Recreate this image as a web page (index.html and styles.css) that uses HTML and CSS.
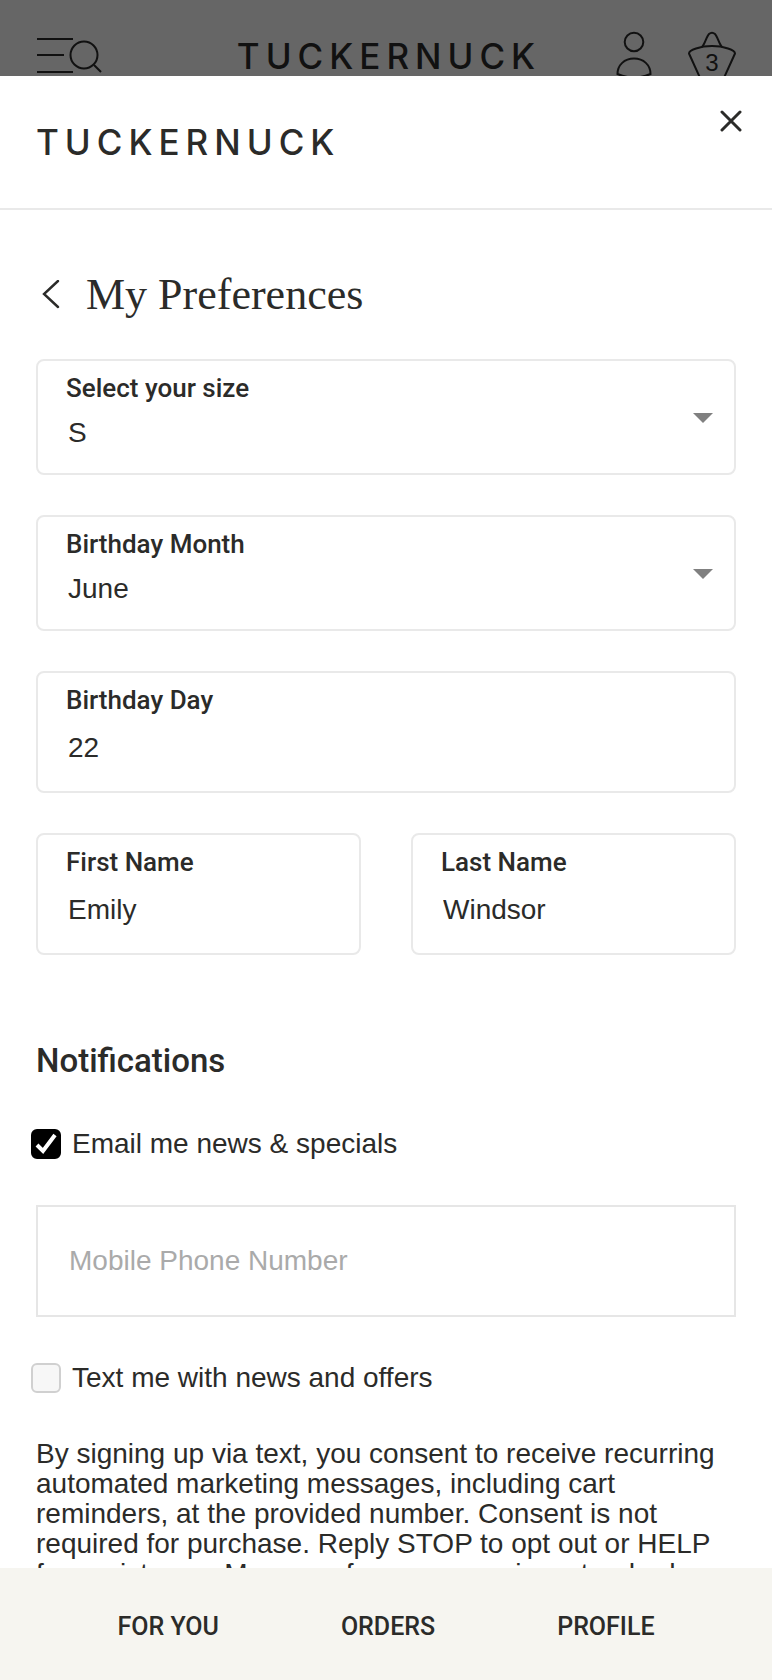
FILE: index.html
```
<!DOCTYPE html>
<html lang="en">
<head>
    <meta charset="UTF-8">
    <meta name="viewport" content="width=device-width, initial-scale=1">
    <title>My Preferences</title>
    <link rel="stylesheet" href="styles.css">
</head>
<body>
    <!-- Dimmed site header -->
    <header class="site-header">
        <button class="icon-btn" type="button" aria-label="Menu and search">
            <svg width="66" height="76" viewBox="0 0 66 76" fill="none" stroke="currentColor" stroke-width="2">
                <path d="M1 39H37M1 55H28M1 72H37"/>
                <circle cx="48" cy="55" r="13.5"/>
                <path d="M58 65L65 72"/>
            </svg>
        </button>
        <a href="#" class="logo">TUCKERNUCK</a>
        <div class="header-actions">
            <button class="icon-btn" type="button" aria-label="Account">
                <svg width="36" height="76" viewBox="0 0 36 76" fill="none" stroke="currentColor" stroke-width="2">
                    <circle cx="18" cy="42" r="9.3"/>
                    <path d="M1.5 74C1.5 65 8.500 58.500 18 58.500S34.500 65 34.500 74C30 76 24 77.500 18 77.500S6 76 1.500 74Z"/>
                </svg>
            </button>
            <button class="icon-btn bag" type="button" aria-label="Shopping bag">
                <svg width="48" height="76" viewBox="0 0 48 76" fill="none" stroke="currentColor" stroke-width="2">
                    <path d="M14 47C17 44 18.500 36.500 21 34Q24 31.500 27 34C29.500 36.500 31 44 34 47"/>
                    <path d="M1 53.500C1 50 12 46 24 46S47 50 47 53.500L35 80H13Z" stroke-linejoin="round"/>
                </svg>
                <span class="bag-count">3</span>
            </button>
        </div>
    </header>

    <!-- Account drawer -->
    <div class="drawer">
        <div class="drawer-head">
            <a href="#" class="logo">TUCKERNUCK</a>
            <button class="icon-btn close-btn" type="button" aria-label="Close">
                <svg width="22" height="22" viewBox="0 0 22 22" fill="none" stroke="currentColor" stroke-width="3" stroke-linecap="round">
                    <path d="M2 2L20 20M20 2L2 20"/>
                </svg>
            </button>
        </div>

        <main class="drawer-body">
            <div class="title-row">
                <button class="icon-btn" type="button" aria-label="Back">
                    <svg width="18" height="30" viewBox="0 0 18 30" fill="none" stroke="currentColor" stroke-width="2.400" stroke-linecap="round">
                        <path d="M16 1L2 14L16 27"/>
                    </svg>
                </button>
                <h1>My Preferences</h1>
            </div>

            <form>
                <div class="fields">
                    <div class="field field-select">
                        <label for="size">Select your size</label>
                        <select id="size">
                            <option>XS</option>
                            <option selected>S</option>
                            <option>M</option>
                            <option>L</option>
                        </select>
                    </div>
                    <div class="field field-select">
                        <label for="month">Birthday Month</label>
                        <select id="month">
                            <option>May</option>
                            <option selected>June</option>
                            <option>July</option>
                        </select>
                    </div>
                    <div class="field">
                        <label for="day">Birthday Day</label>
                        <input type="text" id="day" value="22">
                    </div>
                    <div class="name-row">
                        <div class="field">
                            <label for="first-name">First Name</label>
                            <input type="text" id="first-name" value="Emily">
                        </div>
                        <div class="field">
                            <label for="last-name">Last Name</label>
                            <input type="text" id="last-name" value="Windsor">
                        </div>
                    </div>
                </div>

                <h2>Notifications</h2>

                <div class="notifications">
                    <div class="check-row">
                        <input type="checkbox" id="email-news" checked>
                        <label for="email-news">Email me news &amp; specials</label>
                    </div>
                    <input class="phone" type="tel" placeholder="Mobile Phone Number" aria-label="Mobile Phone Number">
                    <div class="check-row">
                        <input type="checkbox" id="text-news">
                        <label for="text-news">Text me with news and offers</label>
                    </div>
                    <p>By signing up via text, you consent to receive recurring automated marketing messages, including cart reminders, at the provided number. Consent is not required for purchase. Reply STOP to opt out or HELP for assistance. Message frequency varies, standard</p>
                </div>
            </form>
        </main>

        <nav class="tabs">
            <a href="#">FOR YOU</a>
            <a href="#">ORDERS</a>
            <a href="#">PROFILE</a>
        </nav>
    </div>
</body>
</html>
```
FILE: styles.css
```
* {
    box-sizing: border-box;
}

body {
    display: flex;
    flex-direction: column;
    height: 100vh;
    margin: 0;
    font-family: "Liberation Sans", Arial, sans-serif;
    font-size: 28px;
    line-height: 30px;
    color: #2b2b29;
    background-color: #fff;
}

a {
    color: inherit;
    text-decoration: none;
}

svg {
    display: block;
}

.icon-btn {
    padding: 0;
    border: none;
    background: none;
    color: inherit;
    cursor: pointer;
}

.logo {
    font-family: Inter, sans-serif;
    font-size: 35px;
    font-weight: 500;
    line-height: 40px;
    letter-spacing: 6px;
}

/* Site header, under the overlay */
.site-header {
    display: grid;
    grid-template-columns: 1fr auto 1fr;
    flex: none;
    height: 76px;
    padding: 0 36px;
    overflow: hidden;
    background-color: #666;
    color: #111;
}

.site-header > .icon-btn {
    justify-self: start;
}

.site-header .logo {
    padding: 36px 0 0 6px;
}

.header-actions {
    display: flex;
    justify-content: flex-end;
    gap: 36px;
}

.bag {
    position: relative;
}

.bag-count {
    position: absolute;
    top: 48px;
    left: 0;
    width: 100%;
    font-family: "Liberation Sans", Arial, sans-serif;
    font-size: 24px;
    line-height: 30px;
    text-align: center;
}

/* Drawer */
.drawer {
    display: flex;
    flex-direction: column;
    flex: 1;
    min-height: 0;
}

.drawer-head {
    display: flex;
    justify-content: space-between;
    align-items: center;
    flex: none;
    padding: 34px 30px 34px 36px;
    border-bottom: 2px solid #e9e9e9;
}

.drawer-head .logo {
    padding: 12px 0;
}

.close-btn {
    align-self: flex-start;
}

.drawer-body {
    flex: 1;
    min-height: 0;
    padding: 62px 36px 0;
    overflow-y: auto;
    scrollbar-width: none;
}

.title-row {
    display: flex;
    align-items: center;
    gap: 26px;
    margin-bottom: 41px;
    padding-left: 6px;
}

h1 {
    margin: 0;
    font-family: "Liberation Serif", "Times New Roman", serif;
    font-size: 44px;
    font-weight: 400;
    line-height: 46px;
}

/* Form fields */
.fields {
    display: grid;
    gap: 40px;
}

.name-row {
    display: grid;
    grid-template-columns: 1fr 1fr;
    gap: 50px;
}

.field {
    position: relative;
    border: 2px solid #e9e9e9;
    border-radius: 8px;
}

.field label {
    display: block;
    padding: 12px 28px 0;
    font-family: Roboto, sans-serif;
    font-size: 26px;
    font-weight: 500;
}

.field input,
.field select {
    display: block;
    width: 100%;
    height: 76px;
    padding: 0 30px 10px;
    border: none;
    outline: none;
    background: none;
    color: inherit;
    font: inherit;
    appearance: none;
}

.field select {
    height: 70px;
}

.field-select::after {
    content: "";
    position: absolute;
    top: 52px;
    right: 21px;
    border: 10px solid transparent;
    border-top-color: #808080;
    border-bottom: none;
    pointer-events: none;
}

/* Notifications */
h2 {
    margin: 86px 0 48px;
    font-family: Roboto, sans-serif;
    font-size: 33px;
    font-weight: 500;
    line-height: 40px;
}

.notifications {
    display: grid;
    gap: 46px;
}

.check-row {
    display: flex;
    align-items: center;
    gap: 11px;
    margin-left: -5px;
}

.check-row input {
    width: 30px;
    height: 30px;
    margin: 0;
    border: 2px solid #d0d0d0;
    border-radius: 6px;
    background-color: #f7f7f7;
    appearance: none;
}

.check-row input:checked {
    border-color: #000;
    background: #000 url("data:image/svg+xml,%3Csvg xmlns='http://www.w3.org/2000/svg' viewBox='0 0 26 26' fill='none' stroke='white' stroke-width='4'%3E%3Cpath d='M4 14L10 20L22 4'/%3E%3C/svg%3E") center / 26px no-repeat;
}

.phone {
    width: 100%;
    height: 112px;
    padding: 0 31px;
    border: 2px solid #e6e6e6;
    border-radius: 0;
    color: inherit;
    font: inherit;
}

.phone::placeholder {
    color: #aaa;
}

p {
    margin: 0;
}

/* Bottom tabs */
.tabs {
    display: flex;
    justify-content: center;
    gap: 122px;
    flex: none;
    padding: 44px 0 38px;
    background-color: #f6f5f0;
    font-family: Roboto, sans-serif;
    font-size: 25px;
    font-weight: 500;
}
```
